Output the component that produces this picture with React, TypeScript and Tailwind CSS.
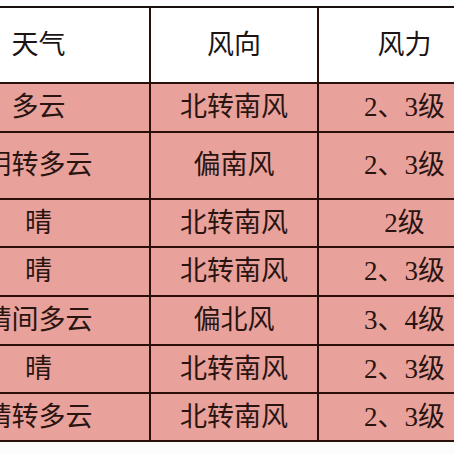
const rows = [
  { weather: "多云", dir: "北转南风", force: "2、3级", h: "h-[49px]" },
  { weather: "阴转多云", dir: "偏南风", force: "2、3级", h: "h-[67px]" },
  { weather: "晴", dir: "北转南风", force: "2级", h: "h-[48px]" },
  { weather: "晴", dir: "北转南风", force: "2、3级", h: "h-[49px]" },
  { weather: "晴间多云", dir: "偏北风", force: "3、4级", h: "h-[49px]" },
  { weather: "晴", dir: "北转南风", force: "2、3级", h: "h-[48px]" },
  { weather: "晴转多云", dir: "北转南风", force: "2、3级", h: "h-[48px]" },
];

function Row({ cells, h, header }: { cells: string[]; h: string; header?: boolean }) {
  const bg = header ? "bg-white text-[#1c1414]" : "bg-[#e8a19b] text-[#2a1410]";
  return (
    <div className={`flex ${h} border-b-2 border-[#2a0f0b] ${bg}`}>
      <div className="w-[223px] shrink-0 flex items-center justify-center border-r-2 border-[#2a0f0b]">
        {cells[0]}
      </div>
      <div className="w-[168px] shrink-0 flex items-center justify-center border-r-2 border-[#2a0f0b]">
        {cells[1]}
      </div>
      <div className="w-[171px] shrink-0 flex items-center justify-center">{cells[2]}</div>
    </div>
  );
}

export default function App() {
  return (
    <div
      className="w-[454px] h-[454px] overflow-hidden bg-[#fcfcfc] pt-[6px] text-[27px] leading-none"
      style={{ fontFamily: '"Liberation Serif", "Noto Sans CJK SC", serif' }}
    >
      <div className="ml-[-72px] w-[562px] border-t-2 border-[#1a1010]">
        <Row header cells={["天气", "风向", "风力"]} h="h-[76px]" />
        {rows.map((r, i) => (
          <Row key={i} cells={[r.weather, r.dir, r.force]} h={r.h} />
        ))}
      </div>
    </div>
  );
}
